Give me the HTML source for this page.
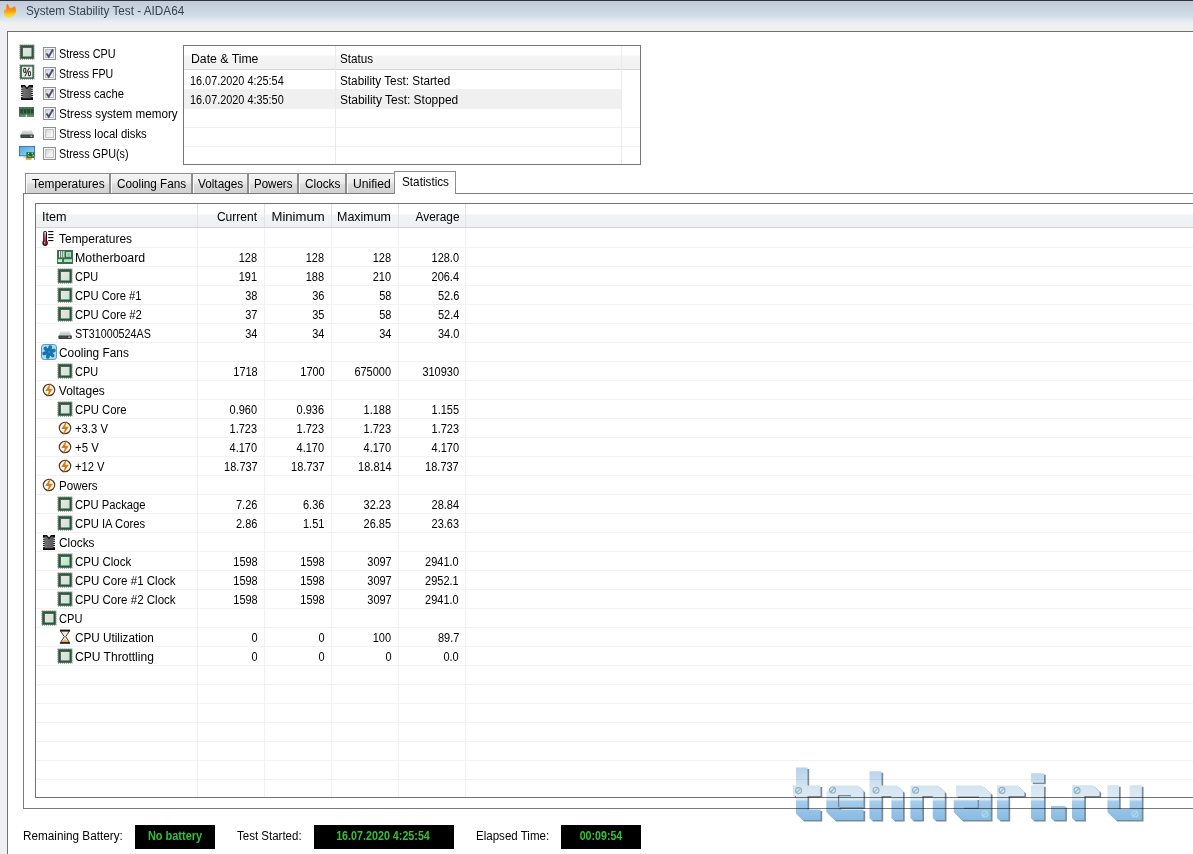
<!DOCTYPE html>
<html>
<head>
<meta charset="utf-8">
<title>System Stability Test - AIDA64</title>
<style>
*{box-sizing:border-box;margin:0;padding:0}
html,body{width:1193px;height:854px;overflow:hidden;background:#f0f0f0}
body{position:relative;font-family:"Liberation Sans",sans-serif;font-size:12px;color:#000;line-height:14px}
.abs{position:absolute}
.t{position:absolute;white-space:nowrap;height:14px;line-height:14px;font-size:12px}
.t span{display:inline-block}
.ttl{color:#39424f}
.grn{color:#34c034;font-weight:bold}
#titlebar{left:0;top:0;width:1193px;height:31px;background:linear-gradient(to bottom,#2b3442 0,#2b3442 1px,#c4cbd7 1px,#c9d3df 9px,#d2e0ec 17px,#dbe6ef 19px,#ebedf0 22px,#f0f0f0 24px,#f1f1f1 31px)}
#leftstrip{left:0;top:22px;width:7px;height:832px;background:#f0f0f3}
#panel{left:7px;top:31px;width:1200px;height:840px;background:#fff;border:1px solid #707070}
.cb{position:absolute;left:43px;width:13px;height:13px;border:1px solid #8e8f8f;background:#f4f4f4}
.cb:before{content:"";position:absolute;left:1px;top:1px;right:1px;bottom:1px}
.cb.on:before{background:linear-gradient(135deg,#cfd0da 0,#e6e6ee 45%,#f4f4f8 100%);border:1px solid #b9bac6}
.cb.off:before{background:linear-gradient(135deg,#d4d4d4 0,#ededed 50%,#fbfbfb 100%);border:1px solid #c4c4c4}
.cb svg{position:absolute;left:0;top:0}
#log{left:183px;top:45px;width:458px;height:120px;border:1px solid #767676;background:#fff}
#loghead{left:184px;top:46px;width:456px;height:23px;background:linear-gradient(to bottom,#ffffff 0,#ffffff 39%,#f5f5f5 45%,#f1f1f1 100%)}
.tab{position:absolute;top:173px;height:20px;border:1px solid #8c8c8c;border-bottom:none;background:linear-gradient(to bottom,#f3f3f3 0,#ececec 48%,#dedede 52%,#d1d1d1 100%);box-shadow:inset 1px 1px 0 #fafafa}
.tabsel{position:absolute;top:171px;height:23px;border:1px solid #8c8c8c;border-bottom:none;background:#fff}
#pane{left:23px;top:193px;width:1180px;height:616px;border:1px solid #7b7b7b;background:#fff}
#list{left:35px;top:203px;width:1170px;height:595px;border:1px solid #737373;background:#fff}
#listhead{left:36px;top:204px;width:1157px;height:23px;background:linear-gradient(to bottom,#ffffff 0,#ffffff 42%,#f2f3f5 48%,#eff0f3 100%)}
.blk{position:absolute;top:825px;height:24px;background:#000}
</style>
</head>
<body>
<div id="titlebar" class="abs"></div>
<div id="leftstrip" class="abs"></div>
<div id="panel" class="abs"></div>

<!-- log -->
<div id="log" class="abs"></div>
<div id="loghead" class="abs"></div>
<div class="abs" style="left:184px;top:69px;width:456px;height:1px;background:#d6d6d6"></div>
<div class="abs" style="left:184px;top:89px;width:437px;height:20px;background:#f0f0f0"></div>
<div class="abs" style="left:184px;top:127px;width:456px;height:1px;background:#efefef"></div>
<div class="abs" style="left:184px;top:146px;width:456px;height:1px;background:#efefef"></div>
<div class="abs" style="left:335px;top:46px;width:1px;height:118px;background:#ebebeb"></div>
<div class="abs" style="left:621px;top:46px;width:1px;height:118px;background:#ebebeb"></div>

<!-- tabs -->
<div id="pane" class="abs"></div>
<div class="tab" style="left:25px;width:85px"></div>
<div class="tab" style="left:110px;width:82px"></div>
<div class="tab" style="left:192px;width:56px"></div>
<div class="tab" style="left:248px;width:50px"></div>
<div class="tab" style="left:298px;width:48px"></div>
<div class="tab" style="left:346px;width:49px"></div>
<div class="tabsel" style="left:394px;width:62px"></div>

<!-- list -->
<div id="list" class="abs"></div>
<div id="listhead" class="abs"></div>
<div class="abs" style="left:36px;top:227px;width:1157px;height:1px;background:#d5d5d5"></div>
<div class="abs" style="left:197px;top:228px;width:1px;height:569px;background:#f0f0f0"></div>
<div class="abs" style="left:197px;top:204px;width:1px;height:23px;background:#e2e4e8"></div>
<div class="abs" style="left:264px;top:228px;width:1px;height:569px;background:#f0f0f0"></div>
<div class="abs" style="left:264px;top:204px;width:1px;height:23px;background:#e2e4e8"></div>
<div class="abs" style="left:331px;top:228px;width:1px;height:569px;background:#f0f0f0"></div>
<div class="abs" style="left:331px;top:204px;width:1px;height:23px;background:#e2e4e8"></div>
<div class="abs" style="left:398px;top:228px;width:1px;height:569px;background:#f0f0f0"></div>
<div class="abs" style="left:398px;top:204px;width:1px;height:23px;background:#e2e4e8"></div>
<div class="abs" style="left:465px;top:228px;width:1px;height:569px;background:#f0f0f0"></div>
<div class="abs" style="left:465px;top:204px;width:1px;height:23px;background:#e2e4e8"></div>
<div class="abs" style="left:36px;top:247px;width:1157px;height:1px;background:#f2f2f2"></div>
<div class="abs" style="left:36px;top:266px;width:1157px;height:1px;background:#f2f2f2"></div>
<div class="abs" style="left:36px;top:285px;width:1157px;height:1px;background:#f2f2f2"></div>
<div class="abs" style="left:36px;top:304px;width:1157px;height:1px;background:#f2f2f2"></div>
<div class="abs" style="left:36px;top:323px;width:1157px;height:1px;background:#f2f2f2"></div>
<div class="abs" style="left:36px;top:342px;width:1157px;height:1px;background:#f2f2f2"></div>
<div class="abs" style="left:36px;top:361px;width:1157px;height:1px;background:#f2f2f2"></div>
<div class="abs" style="left:36px;top:380px;width:1157px;height:1px;background:#f2f2f2"></div>
<div class="abs" style="left:36px;top:399px;width:1157px;height:1px;background:#f2f2f2"></div>
<div class="abs" style="left:36px;top:418px;width:1157px;height:1px;background:#f2f2f2"></div>
<div class="abs" style="left:36px;top:437px;width:1157px;height:1px;background:#f2f2f2"></div>
<div class="abs" style="left:36px;top:456px;width:1157px;height:1px;background:#f2f2f2"></div>
<div class="abs" style="left:36px;top:475px;width:1157px;height:1px;background:#f2f2f2"></div>
<div class="abs" style="left:36px;top:494px;width:1157px;height:1px;background:#f2f2f2"></div>
<div class="abs" style="left:36px;top:513px;width:1157px;height:1px;background:#f2f2f2"></div>
<div class="abs" style="left:36px;top:532px;width:1157px;height:1px;background:#f2f2f2"></div>
<div class="abs" style="left:36px;top:551px;width:1157px;height:1px;background:#f2f2f2"></div>
<div class="abs" style="left:36px;top:570px;width:1157px;height:1px;background:#f2f2f2"></div>
<div class="abs" style="left:36px;top:589px;width:1157px;height:1px;background:#f2f2f2"></div>
<div class="abs" style="left:36px;top:608px;width:1157px;height:1px;background:#f2f2f2"></div>
<div class="abs" style="left:36px;top:627px;width:1157px;height:1px;background:#f2f2f2"></div>
<div class="abs" style="left:36px;top:646px;width:1157px;height:1px;background:#f2f2f2"></div>
<div class="abs" style="left:36px;top:665px;width:1157px;height:1px;background:#f2f2f2"></div>
<div class="abs" style="left:36px;top:684px;width:1157px;height:1px;background:#f2f2f2"></div>
<div class="abs" style="left:36px;top:703px;width:1157px;height:1px;background:#f2f2f2"></div>
<div class="abs" style="left:36px;top:722px;width:1157px;height:1px;background:#f2f2f2"></div>
<div class="abs" style="left:36px;top:741px;width:1157px;height:1px;background:#f2f2f2"></div>
<div class="abs" style="left:36px;top:760px;width:1157px;height:1px;background:#f2f2f2"></div>
<div class="abs" style="left:36px;top:779px;width:1157px;height:1px;background:#f2f2f2"></div>

<!-- checkboxes -->
<div class="cb on" style="top:47px"><svg width="11" height="11" viewBox="0 0 11 11"><path d="M2.6,5.6 L4.7,8.8 L8.9,1.6" fill="none" stroke="#474c66" stroke-width="1.9" stroke-linecap="butt" stroke-linejoin="miter"/></svg></div>
<div class="cb on" style="top:67px"><svg width="11" height="11" viewBox="0 0 11 11"><path d="M2.6,5.6 L4.7,8.8 L8.9,1.6" fill="none" stroke="#474c66" stroke-width="1.9" stroke-linecap="butt" stroke-linejoin="miter"/></svg></div>
<div class="cb on" style="top:87px"><svg width="11" height="11" viewBox="0 0 11 11"><path d="M2.6,5.6 L4.7,8.8 L8.9,1.6" fill="none" stroke="#474c66" stroke-width="1.9" stroke-linecap="butt" stroke-linejoin="miter"/></svg></div>
<div class="cb on" style="top:107px"><svg width="11" height="11" viewBox="0 0 11 11"><path d="M2.6,5.6 L4.7,8.8 L8.9,1.6" fill="none" stroke="#474c66" stroke-width="1.9" stroke-linecap="butt" stroke-linejoin="miter"/></svg></div>
<div class="cb off" style="top:127px"></div>
<div class="cb off" style="top:147px"></div>

<!-- status boxes -->
<div class="blk" style="left:135px;width:80px"></div>
<div class="blk" style="left:314px;width:140px"></div>
<div class="blk" style="left:561px;width:80px"></div>

<svg class="abs" style="left:0;top:0" width="1193" height="854" viewBox="0 0 1193 854">

<defs>
<linearGradient id="gInner" x1="0" y1="0" x2="1" y2="1"><stop offset="0" stop-color="#ece2e2"/><stop offset="1" stop-color="#cbe6d8"/></linearGradient>
<linearGradient id="gInner2" x1="0" y1="0" x2="1" y2="1"><stop offset="0" stop-color="#d4f2dc"/><stop offset="1" stop-color="#b4e6c4"/></linearGradient>
<linearGradient id="gTherm" x1="0" y1="0" x2="0" y2="1"><stop offset="0" stop-color="#f6dada"/><stop offset="0.45" stop-color="#d86070"/><stop offset="1" stop-color="#b81c30"/></linearGradient>
<linearGradient id="gMon" x1="0" y1="0" x2="1" y2="1"><stop offset="0" stop-color="#4aa6e6"/><stop offset="1" stop-color="#9adaf2"/></linearGradient>
<linearGradient id="gSand" x1="0" y1="0" x2="0" y2="1"><stop offset="0" stop-color="#f6dca8"/><stop offset="1" stop-color="#de9a38"/></linearGradient>
<linearGradient id="gFlame" x1="0" y1="0" x2="0" y2="1"><stop offset="0" stop-color="#e96f19"/><stop offset="0.5" stop-color="#f6921c"/><stop offset="0.78" stop-color="#ffcf1c"/><stop offset="1" stop-color="#ffe246"/></linearGradient>
<linearGradient id="gDip" x1="0" y1="0" x2="1" y2="0"><stop offset="0" stop-color="#707070"/><stop offset="1" stop-color="#5a5a5a"/></linearGradient>
<g id="cpu">
 <rect x="0.85" y="0.85" width="14.3" height="14.3" fill="none" stroke="#456c52" stroke-width="0.9" stroke-dasharray="1 1" stroke-dashoffset="0.2"/>
 <rect x="1.2" y="1.2" width="13.6" height="13.6" fill="#32543e"/>
 <rect x="3.1" y="3.1" width="9.8" height="9.8" fill="#467055"/>
 <rect x="4" y="4" width="8.4" height="8.4" fill="url(#gInner)"/>
</g>
<g id="cpu2">
 <rect x="0.85" y="0.85" width="14.3" height="14.3" fill="none" stroke="#456c52" stroke-width="0.9" stroke-dasharray="1 1" stroke-dashoffset="0.2"/>
 <rect x="1.2" y="1.2" width="13.6" height="13.6" fill="#32543e"/>
 <rect x="3.1" y="3.1" width="9.8" height="9.8" fill="#467055"/>
 <rect x="4" y="4" width="8.4" height="8.4" fill="url(#gInner2)"/>
</g>
<g id="fpu">
 <rect x="0.85" y="0.85" width="14.3" height="14.3" fill="none" stroke="#456c52" stroke-width="0.9" stroke-dasharray="1 1" stroke-dashoffset="0.2"/>
 <rect x="1.2" y="1.2" width="13.6" height="13.6" fill="#32543e"/>
 <rect x="2.8" y="2.6" width="10.6" height="10.8" fill="#e4efe8"/>
 <text transform="translate(8.1,12) scale(0.84,1)" font-family="Liberation Sans, sans-serif" font-size="11" text-anchor="middle" fill="#0c0c0c" stroke="#0c0c0c" stroke-width="0.25">%</text>
</g>
<g id="dip">
 <path d="M2,1 H6 L8,3.4 L10,1 H14 V16 H2 Z" fill="#0a0a0a"/>
 <path d="M3.8,2.6 H5.5 L8,5.3 L10.5,2.6 H12.2 V14.2 H3.8 Z" fill="url(#gDip)"/>
 <g fill="#fff"><rect x="2.1" y="3.6" width="1.5" height="1.2"/><rect x="12.4" y="3.6" width="1.5" height="1.2"/><rect x="2.1" y="5.7" width="1.5" height="1.2"/><rect x="12.4" y="5.7" width="1.5" height="1.2"/><rect x="2.1" y="7.8" width="1.5" height="1.2"/><rect x="12.4" y="7.8" width="1.5" height="1.2"/><rect x="2.1" y="9.9" width="1.5" height="1.2"/><rect x="12.4" y="9.9" width="1.5" height="1.2"/><rect x="2.1" y="12.0" width="1.5" height="1.2"/><rect x="12.4" y="12.0" width="1.5" height="1.2"/></g>
</g>
<g id="mem">
 <rect x="0" y="3" width="15" height="9.8" fill="#41704f"/>
 <g fill="#284a35"><rect x="1.2" y="5" width="2.6" height="4.2"/><rect x="4.8" y="5" width="2.6" height="4.2"/><rect x="8.4" y="5" width="2.6" height="4.2"/><rect x="12" y="5" width="2.4" height="4.2"/></g>
 <g fill="#6f9b7d"><rect x="1.8" y="3.6" width="1" height="0.9"/><rect x="5.4" y="3.6" width="1" height="0.9"/><rect x="9" y="3.6" width="1" height="0.9"/><rect x="12.4" y="3.6" width="1" height="0.9"/></g>
 <rect x="0.4" y="10.8" width="14.2" height="1.2" fill="#5f8f6f"/>
 <rect x="6.8" y="10.6" width="1" height="2.3" fill="#fff"/>
</g>
<g id="hdd">
 <path d="M3.4,6.8 H12.8 L14.7,11 H1.5 Z" fill="#c9cdcd"/>
 <path d="M3.4,6.8 H12.8 L13.2,7.8 H3 Z" fill="#dfe2e2"/>
 <rect x="1.4" y="10.6" width="13.4" height="3.3" rx="0.6" fill="#3a3e3e"/>
 <rect x="2.6" y="11.8" width="7" height="0.7" fill="#5c6060"/>
 <rect x="11.3" y="11.6" width="2" height="1.1" fill="#e8ecec"/>
</g>
<g id="gpu">
 <rect x="0.4" y="2.4" width="15.2" height="9.4" fill="url(#gMon)" stroke="#356f9c" stroke-width="0.9"/>
 <rect x="4.5" y="12.6" width="3" height="0.9" fill="#9aa2aa"/>
 <rect x="7.3" y="8" width="8.2" height="6" fill="#2f7a46"/>
 <g fill="#bfe6c6"><rect x="9" y="8.8" width="1.2" height="1.2"/><rect x="12.6" y="8.6" width="1.3" height="1.3"/><rect x="13.6" y="11" width="1.2" height="1.2"/><rect x="9.4" y="11.4" width="2.4" height="1"/></g>
 <rect x="10.2" y="9.6" width="2.6" height="2.4" fill="#1f5a30"/>
 <rect x="6.8" y="14" width="5.8" height="1.8" fill="#f0981e"/>
 <rect x="15" y="12" width="0.8" height="4" fill="#7a828a"/>
</g>
<g id="therm">
 <rect x="2.2" y="1" width="3.8" height="13" rx="1.9" fill="#111"/>
 <circle cx="4.1" cy="13.1" r="2.8" fill="#111"/>
 <rect x="3.3" y="2" width="1.7" height="11" fill="url(#gTherm)"/>
 <circle cx="4.1" cy="13.1" r="1.8" fill="#b81c30"/>
 <rect x="3.1" y="11.6" width="0.9" height="2" fill="#e89aa2"/>
 <g fill="#111"><rect x="7.2" y="1" width="5.2" height="1.1"/><rect x="7.2" y="4" width="5.2" height="1.1"/><rect x="7.2" y="7" width="5.2" height="1.1"/><rect x="7.2" y="10" width="5.2" height="1.1"/></g>
</g>
<g id="mb">
 <rect x="0" y="1" width="16" height="14" fill="#3d6e4d"/>
 <g fill="#eaf6ee"><rect x="2" y="2.2" width="1.2" height="6.2"/><rect x="4.1" y="2.2" width="1.2" height="6.2"/><rect x="6.2" y="2.2" width="1.2" height="6.2"/></g>
 <rect x="9" y="3" width="5" height="4.8" fill="#a9dcba"/><rect x="10.2" y="4.2" width="2.6" height="2.4" fill="#8fcaa4"/>
 <rect x="0.9" y="10.2" width="4.2" height="2.8" fill="#c3eed2"/>
 <rect x="7" y="10.2" width="8" height="2.8" fill="#aee2c0"/>
</g>
<g id="fan">
 <rect x="0.5" y="0.5" width="15" height="15" rx="2.6" fill="#aadcf4" stroke="#5b9cc2" stroke-width="1"/>
 <g stroke="#1874ae" stroke-width="3.7" stroke-linecap="round">
  <line x1="8" y1="2.9" x2="8" y2="13.1" transform="rotate(14 8 8)"/>
  <line x1="8" y1="2.9" x2="8" y2="13.1" transform="rotate(74 8 8)"/>
  <line x1="8" y1="2.9" x2="8" y2="13.1" transform="rotate(134 8 8)"/>
 </g>
 <circle cx="8" cy="8" r="1.2" fill="#2a8ac2"/>
</g>
<g id="volt">
 <circle cx="8" cy="8" r="5.7" fill="#fffaf2" stroke="#56381f" stroke-width="1.2"/>
 <path d="M9.8,0.4 L4.3,8.9 L7.8,8.9 L6,15.5 L11.8,6.8 L8.3,6.8 Z" fill="#d27c1c"/>
</g>
<g id="hour">
 <path d="M3.6,2 H12.4 L8.7,7.7 L12.4,13.4 H3.6 L7.3,7.7 Z" fill="#fbf4e2" stroke="#222" stroke-width="0.9" stroke-linejoin="round"/>
 <path d="M8,9.4 L11.4,13.1 H4.6 Z" fill="url(#gSand)"/>
 <path d="M5.6,3 H10.4 L8,6.4 Z" fill="#f4ead0"/>
 <rect x="2.9" y="0.6" width="10.2" height="1.7" fill="#1c1c1c"/>
 <rect x="2.9" y="13.3" width="10.2" height="1.5" fill="#1c1c1c"/>
</g>
<g id="flame">
 <path d="M7.2,3.4 C8,5.4 9.4,6.6 10.3,8.5 C11.6,8.1 13.2,7.3 14.7,6 C15.8,7.9 16.4,10.2 15.7,12.5 C14.8,15.5 12,17.7 9,17.7 C6,17.7 3.9,15.5 3.9,12.6 C3.9,11 4.5,9.7 5.2,8.9 C5.3,9.9 5.7,10.5 6.3,10.7 C5.9,8.3 6.1,5.5 7.2,3.4 Z" fill="url(#gFlame)"/>
 <path d="M8.6,9.5 C9.4,10.4 10.6,10.6 11.8,10 C12,11.6 11.2,12.8 9.8,13.2 C8.4,13.4 7.4,12.4 7.6,11 C7.8,10.4 8.2,9.9 8.6,9.5 Z" fill="#f9a51c" opacity="0.6"/>
</g>
</defs>

<use href="#flame" x="0" y="0"/>
<use href="#cpu" x="19" y="44"/>
<use href="#fpu" x="19" y="64"/>
<use href="#dip" x="19" y="84"/>
<use href="#mem" x="19" y="104"/>
<use href="#hdd" x="19" y="124"/>
<use href="#gpu" x="19" y="144"/>
<use href="#therm" x="41" y="230"/>
<use href="#mb" x="57" y="249"/>
<use href="#cpu" x="57" y="268"/>
<use href="#cpu" x="57" y="287"/>
<use href="#cpu" x="57" y="306"/>
<use href="#hdd" x="57" y="325"/>
<use href="#fan" x="41" y="344"/>
<use href="#cpu" x="57" y="363"/>
<use href="#volt" x="41" y="382"/>
<use href="#cpu" x="57" y="401"/>
<use href="#volt" x="57" y="420"/>
<use href="#volt" x="57" y="439"/>
<use href="#volt" x="57" y="458"/>
<use href="#volt" x="41" y="477"/>
<use href="#cpu" x="57" y="496"/>
<use href="#cpu" x="57" y="515"/>
<use href="#dip" x="41" y="534"/>
<use href="#cpu2" x="57" y="553"/>
<use href="#cpu" x="57" y="572"/>
<use href="#cpu" x="57" y="591"/>
<use href="#cpu" x="41" y="610"/>
<use href="#hour" x="57" y="629"/>
<use href="#cpu" x="57" y="648"/>
</svg>
<div class="t ttl" style="top:3.7px;left:26.1px;transform-origin:0 0;transform:scaleX(0.9775);"><span>System Stability Test - AIDA64</span></div>
<div class="t" style="top:46.9px;left:58.5px;transform-origin:0 0;transform:scaleX(0.9029);"><span>Stress CPU</span></div>
<div class="t" style="top:66.9px;left:58.5px;transform-origin:0 0;transform:scaleX(0.8835);"><span>Stress FPU</span></div>
<div class="t" style="top:86.9px;left:58.5px;transform-origin:0 0;transform:scaleX(0.9355);"><span>Stress cache</span></div>
<div class="t" style="top:106.9px;left:58.5px;transform-origin:0 0;transform:scaleX(0.9720);"><span>Stress system memory</span></div>
<div class="t" style="top:126.9px;left:58.5px;transform-origin:0 0;transform:scaleX(0.9471);"><span>Stress local disks</span></div>
<div class="t" style="top:146.9px;left:58.5px;transform-origin:0 0;transform:scaleX(0.8999);"><span>Stress GPU(s)</span></div>
<div class="t" style="top:51.7px;left:191.0px;transform-origin:0 0;transform:scaleX(1.0207);"><span>Date &amp; Time</span></div>
<div class="t" style="top:51.7px;left:340.2px;transform-origin:0 0;transform:scaleX(0.9726);"><span>Status</span></div>
<div class="t" style="top:73.5px;left:189.9px;transform-origin:0 0;transform:scaleX(0.9059);"><span>16.07.2020 4:25:54</span></div>
<div class="t" style="top:73.5px;left:340.2px;transform-origin:0 0;transform:scaleX(0.9796);"><span>Stability Test: Started</span></div>
<div class="t" style="top:92.5px;left:189.9px;transform-origin:0 0;transform:scaleX(0.9059);"><span>16.07.2020 4:35:50</span></div>
<div class="t" style="top:92.5px;left:340.2px;transform-origin:0 0;transform:scaleX(0.9972);"><span>Stability Test: Stopped</span></div>
<div class="t" style="top:176.6px;left:32.0px;transform-origin:0 0;transform:scaleX(0.9894);"><span>Temperatures</span></div>
<div class="t" style="top:176.6px;left:116.5px;transform-origin:0 0;transform:scaleX(0.9785);"><span>Cooling Fans</span></div>
<div class="t" style="top:176.6px;left:197.6px;transform-origin:0 0;transform:scaleX(0.9816);"><span>Voltages</span></div>
<div class="t" style="top:176.6px;left:254.3px;transform-origin:0 0;transform:scaleX(0.9596);"><span>Powers</span></div>
<div class="t" style="top:176.6px;left:304.6px;transform-origin:0 0;transform:scaleX(0.9829);"><span>Clocks</span></div>
<div class="t" style="top:176.6px;left:352.5px;transform-origin:0 0;transform:scaleX(1.0118);"><span>Unified</span></div>
<div class="t" style="top:174.6px;left:402.1px;transform-origin:0 0;transform:scaleX(0.9788);"><span>Statistics</span></div>
<div class="t" style="top:209.7px;left:42.2px;transform-origin:0 0;transform:scaleX(1.0495);"><span>Item</span></div>
<div class="t" style="top:209.7px;right:935.6px;transform-origin:100% 0;transform:scaleX(1.0021);"><span>Current</span></div>
<div class="t" style="top:209.7px;right:868.4px;transform-origin:100% 0;transform:scaleX(1.0930);"><span>Minimum</span></div>
<div class="t" style="top:209.7px;right:801.8px;transform-origin:100% 0;transform:scaleX(1.0381);"><span>Maximum</span></div>
<div class="t" style="top:209.7px;right:733.9px;transform-origin:100% 0;transform:scaleX(0.9869);"><span>Average</span></div>
<div class="t" style="top:231.8px;left:58.8px;transform-origin:0 0;transform:scaleX(0.9963);"><span>Temperatures</span></div>
<div class="t" style="top:250.8px;left:74.8px;transform-origin:0 0;transform:scaleX(1.0316);"><span>Motherboard</span></div>
<div class="t" style="top:250.8px;right:935.7px;transform-origin:100% 0;transform:scaleX(0.9150);"><span>128</span></div>
<div class="t" style="top:250.8px;right:868.5px;transform-origin:100% 0;transform:scaleX(0.9150);"><span>128</span></div>
<div class="t" style="top:250.8px;right:801.7px;transform-origin:100% 0;transform:scaleX(0.9150);"><span>128</span></div>
<div class="t" style="top:250.8px;right:734.0px;transform-origin:100% 0;transform:scaleX(0.9150);"><span>128.0</span></div>
<div class="t" style="top:269.8px;left:74.8px;transform-origin:0 0;transform:scaleX(0.9115);"><span>CPU</span></div>
<div class="t" style="top:269.8px;right:935.7px;transform-origin:100% 0;transform:scaleX(0.9150);"><span>191</span></div>
<div class="t" style="top:269.8px;right:868.5px;transform-origin:100% 0;transform:scaleX(0.9150);"><span>188</span></div>
<div class="t" style="top:269.8px;right:801.7px;transform-origin:100% 0;transform:scaleX(0.9150);"><span>210</span></div>
<div class="t" style="top:269.8px;right:734.0px;transform-origin:100% 0;transform:scaleX(0.9150);"><span>206.4</span></div>
<div class="t" style="top:288.8px;left:74.8px;transform-origin:0 0;transform:scaleX(0.9303);"><span>CPU Core #1</span></div>
<div class="t" style="top:288.8px;right:935.7px;transform-origin:100% 0;transform:scaleX(0.9150);"><span>38</span></div>
<div class="t" style="top:288.8px;right:868.5px;transform-origin:100% 0;transform:scaleX(0.9150);"><span>36</span></div>
<div class="t" style="top:288.8px;right:801.7px;transform-origin:100% 0;transform:scaleX(0.9150);"><span>58</span></div>
<div class="t" style="top:288.8px;right:734.0px;transform-origin:100% 0;transform:scaleX(0.9150);"><span>52.6</span></div>
<div class="t" style="top:307.8px;left:74.8px;transform-origin:0 0;transform:scaleX(0.9359);"><span>CPU Core #2</span></div>
<div class="t" style="top:307.8px;right:935.7px;transform-origin:100% 0;transform:scaleX(0.9150);"><span>37</span></div>
<div class="t" style="top:307.8px;right:868.5px;transform-origin:100% 0;transform:scaleX(0.9150);"><span>35</span></div>
<div class="t" style="top:307.8px;right:801.7px;transform-origin:100% 0;transform:scaleX(0.9150);"><span>58</span></div>
<div class="t" style="top:307.8px;right:734.0px;transform-origin:100% 0;transform:scaleX(0.9150);"><span>52.4</span></div>
<div class="t" style="top:326.8px;left:74.8px;transform-origin:0 0;transform:scaleX(0.8957);"><span>ST31000524AS</span></div>
<div class="t" style="top:326.8px;right:935.7px;transform-origin:100% 0;transform:scaleX(0.9150);"><span>34</span></div>
<div class="t" style="top:326.8px;right:868.5px;transform-origin:100% 0;transform:scaleX(0.9150);"><span>34</span></div>
<div class="t" style="top:326.8px;right:801.7px;transform-origin:100% 0;transform:scaleX(0.9150);"><span>34</span></div>
<div class="t" style="top:326.8px;right:734.0px;transform-origin:100% 0;transform:scaleX(0.9150);"><span>34.0</span></div>
<div class="t" style="top:345.8px;left:58.8px;transform-origin:0 0;transform:scaleX(0.9884);"><span>Cooling Fans</span></div>
<div class="t" style="top:364.8px;left:74.8px;transform-origin:0 0;transform:scaleX(0.9115);"><span>CPU</span></div>
<div class="t" style="top:364.8px;right:935.7px;transform-origin:100% 0;transform:scaleX(0.9150);"><span>1718</span></div>
<div class="t" style="top:364.8px;right:868.5px;transform-origin:100% 0;transform:scaleX(0.9150);"><span>1700</span></div>
<div class="t" style="top:364.8px;right:801.7px;transform-origin:100% 0;transform:scaleX(0.9150);"><span>675000</span></div>
<div class="t" style="top:364.8px;right:734.0px;transform-origin:100% 0;transform:scaleX(0.9150);"><span>310930</span></div>
<div class="t" style="top:383.8px;left:58.8px;transform-origin:0 0;"><span>Voltages</span></div>
<div class="t" style="top:402.8px;left:74.8px;transform-origin:0 0;transform:scaleX(0.9435);"><span>CPU Core</span></div>
<div class="t" style="top:402.8px;right:935.7px;transform-origin:100% 0;transform:scaleX(0.9150);"><span>0.960</span></div>
<div class="t" style="top:402.8px;right:868.5px;transform-origin:100% 0;transform:scaleX(0.9150);"><span>0.936</span></div>
<div class="t" style="top:402.8px;right:801.7px;transform-origin:100% 0;transform:scaleX(0.9150);"><span>1.188</span></div>
<div class="t" style="top:402.8px;right:734.0px;transform-origin:100% 0;transform:scaleX(0.9150);"><span>1.155</span></div>
<div class="t" style="top:421.8px;left:74.8px;transform-origin:0 0;transform:scaleX(0.9392);"><span>+3.3 V</span></div>
<div class="t" style="top:421.8px;right:935.7px;transform-origin:100% 0;transform:scaleX(0.9150);"><span>1.723</span></div>
<div class="t" style="top:421.8px;right:868.5px;transform-origin:100% 0;transform:scaleX(0.9150);"><span>1.723</span></div>
<div class="t" style="top:421.8px;right:801.7px;transform-origin:100% 0;transform:scaleX(0.9150);"><span>1.723</span></div>
<div class="t" style="top:421.8px;right:734.0px;transform-origin:100% 0;transform:scaleX(0.9150);"><span>1.723</span></div>
<div class="t" style="top:440.8px;left:74.8px;transform-origin:0 0;transform:scaleX(0.9508);"><span>+5 V</span></div>
<div class="t" style="top:440.8px;right:935.7px;transform-origin:100% 0;transform:scaleX(0.9150);"><span>4.170</span></div>
<div class="t" style="top:440.8px;right:868.5px;transform-origin:100% 0;transform:scaleX(0.9150);"><span>4.170</span></div>
<div class="t" style="top:440.8px;right:801.7px;transform-origin:100% 0;transform:scaleX(0.9150);"><span>4.170</span></div>
<div class="t" style="top:440.8px;right:734.0px;transform-origin:100% 0;transform:scaleX(0.9150);"><span>4.170</span></div>
<div class="t" style="top:459.8px;left:74.8px;transform-origin:0 0;transform:scaleX(0.9337);"><span>+12 V</span></div>
<div class="t" style="top:459.8px;right:935.7px;transform-origin:100% 0;transform:scaleX(0.9150);"><span>18.737</span></div>
<div class="t" style="top:459.8px;right:868.5px;transform-origin:100% 0;transform:scaleX(0.9150);"><span>18.737</span></div>
<div class="t" style="top:459.8px;right:801.7px;transform-origin:100% 0;transform:scaleX(0.9150);"><span>18.814</span></div>
<div class="t" style="top:459.8px;right:734.0px;transform-origin:100% 0;transform:scaleX(0.9150);"><span>18.737</span></div>
<div class="t" style="top:478.8px;left:58.8px;transform-origin:0 0;transform:scaleX(0.9646);"><span>Powers</span></div>
<div class="t" style="top:497.8px;left:74.8px;transform-origin:0 0;transform:scaleX(0.9353);"><span>CPU Package</span></div>
<div class="t" style="top:497.8px;right:935.7px;transform-origin:100% 0;transform:scaleX(0.9150);"><span>7.26</span></div>
<div class="t" style="top:497.8px;right:868.5px;transform-origin:100% 0;transform:scaleX(0.9150);"><span>6.36</span></div>
<div class="t" style="top:497.8px;right:801.7px;transform-origin:100% 0;transform:scaleX(0.9150);"><span>32.23</span></div>
<div class="t" style="top:497.8px;right:734.0px;transform-origin:100% 0;transform:scaleX(0.9150);"><span>28.84</span></div>
<div class="t" style="top:516.8px;left:74.8px;transform-origin:0 0;transform:scaleX(0.9397);"><span>CPU IA Cores</span></div>
<div class="t" style="top:516.8px;right:935.7px;transform-origin:100% 0;transform:scaleX(0.9150);"><span>2.86</span></div>
<div class="t" style="top:516.8px;right:868.5px;transform-origin:100% 0;transform:scaleX(0.9150);"><span>1.51</span></div>
<div class="t" style="top:516.8px;right:801.7px;transform-origin:100% 0;transform:scaleX(0.9150);"><span>26.85</span></div>
<div class="t" style="top:516.8px;right:734.0px;transform-origin:100% 0;transform:scaleX(0.9150);"><span>23.63</span></div>
<div class="t" style="top:535.8px;left:58.8px;transform-origin:0 0;transform:scaleX(0.9857);"><span>Clocks</span></div>
<div class="t" style="top:554.8px;left:74.8px;transform-origin:0 0;transform:scaleX(0.9593);"><span>CPU Clock</span></div>
<div class="t" style="top:554.8px;right:935.7px;transform-origin:100% 0;transform:scaleX(0.9150);"><span>1598</span></div>
<div class="t" style="top:554.8px;right:868.5px;transform-origin:100% 0;transform:scaleX(0.9150);"><span>1598</span></div>
<div class="t" style="top:554.8px;right:801.7px;transform-origin:100% 0;transform:scaleX(0.9150);"><span>3097</span></div>
<div class="t" style="top:554.8px;right:734.0px;transform-origin:100% 0;transform:scaleX(0.9150);"><span>2941.0</span></div>
<div class="t" style="top:573.8px;left:74.8px;transform-origin:0 0;transform:scaleX(0.9608);"><span>CPU Core #1 Clock</span></div>
<div class="t" style="top:573.8px;right:935.7px;transform-origin:100% 0;transform:scaleX(0.9150);"><span>1598</span></div>
<div class="t" style="top:573.8px;right:868.5px;transform-origin:100% 0;transform:scaleX(0.9150);"><span>1598</span></div>
<div class="t" style="top:573.8px;right:801.7px;transform-origin:100% 0;transform:scaleX(0.9150);"><span>3097</span></div>
<div class="t" style="top:573.8px;right:734.0px;transform-origin:100% 0;transform:scaleX(0.9150);"><span>2952.1</span></div>
<div class="t" style="top:592.8px;left:74.8px;transform-origin:0 0;transform:scaleX(0.9608);"><span>CPU Core #2 Clock</span></div>
<div class="t" style="top:592.8px;right:935.7px;transform-origin:100% 0;transform:scaleX(0.9150);"><span>1598</span></div>
<div class="t" style="top:592.8px;right:868.5px;transform-origin:100% 0;transform:scaleX(0.9150);"><span>1598</span></div>
<div class="t" style="top:592.8px;right:801.7px;transform-origin:100% 0;transform:scaleX(0.9150);"><span>3097</span></div>
<div class="t" style="top:592.8px;right:734.0px;transform-origin:100% 0;transform:scaleX(0.9150);"><span>2941.0</span></div>
<div class="t" style="top:611.8px;left:58.8px;transform-origin:0 0;transform:scaleX(0.9233);"><span>CPU</span></div>
<div class="t" style="top:630.8px;left:74.8px;transform-origin:0 0;transform:scaleX(0.9777);"><span>CPU Utilization</span></div>
<div class="t" style="top:630.8px;right:935.7px;transform-origin:100% 0;transform:scaleX(0.9150);"><span>0</span></div>
<div class="t" style="top:630.8px;right:868.5px;transform-origin:100% 0;transform:scaleX(0.9150);"><span>0</span></div>
<div class="t" style="top:630.8px;right:801.7px;transform-origin:100% 0;transform:scaleX(0.9150);"><span>100</span></div>
<div class="t" style="top:630.8px;right:734.0px;transform-origin:100% 0;transform:scaleX(0.9150);"><span>89.7</span></div>
<div class="t" style="top:649.8px;left:74.8px;transform-origin:0 0;transform:scaleX(1.0053);"><span>CPU Throttling</span></div>
<div class="t" style="top:649.8px;right:935.7px;transform-origin:100% 0;transform:scaleX(0.9150);"><span>0</span></div>
<div class="t" style="top:649.8px;right:868.5px;transform-origin:100% 0;transform:scaleX(0.9150);"><span>0</span></div>
<div class="t" style="top:649.8px;right:801.7px;transform-origin:100% 0;transform:scaleX(0.9150);"><span>0</span></div>
<div class="t" style="top:649.8px;right:734.0px;transform-origin:100% 0;transform:scaleX(0.9150);"><span>0.0</span></div>
<div class="t" style="top:829.4px;left:22.9px;transform-origin:0 0;transform:scaleX(0.9780);"><span>Remaining Battery:</span></div>
<div class="t" style="top:829.4px;left:237.3px;transform-origin:0 0;transform:scaleX(0.9588);"><span>Test Started:</span></div>
<div class="t" style="top:829.4px;left:475.6px;transform-origin:0 0;transform:scaleX(0.9626);"><span>Elapsed Time:</span></div>
<div class="t grn" style="top:829.0px;left:25.2px;width:300px;text-align:center;transform-origin:50% 0;transform:scaleX(0.9133);"><span>No battery</span></div>
<div class="t grn" style="top:829.0px;left:233.0px;width:300px;text-align:center;transform-origin:50% 0;transform:scaleX(0.8944);"><span>16.07.2020 4:25:54</span></div>
<div class="t grn" style="top:829.0px;left:450.5px;width:300px;text-align:center;transform-origin:50% 0;transform:scaleX(0.8866);"><span>00:09:54</span></div>

<svg class="abs" style="left:0;top:0;mix-blend-mode:multiply" width="1193" height="854" viewBox="0 0 1193 854">
<defs><linearGradient id="gWm" gradientUnits="userSpaceOnUse" x1="0" y1="767" x2="0" y2="821"><stop offset="0" stop-color="#b4d2ec"/><stop offset="0.2" stop-color="#c3dbef"/><stop offset="0.33" stop-color="#d2e3f1"/><stop offset="0.6" stop-color="#deebf3"/><stop offset="0.64" stop-color="#a3cbeb"/><stop offset="1" stop-color="#87bae2"/></linearGradient></defs>
<g fill="#7b8a98" transform="translate(1.7,1.5)"><path d="M796,767.5 H807.5 V785.5 H820.5 V796 H807.5 V809.5 H820.5 V820 H802.5 L796,813.5 V796 H793 V785.5 H796 Z"/><path d="M833,785.5 H858 L863.5,791 V807.3 H839.5 V809.6 H863.5 V820 H834.5 L826.3,812 V792 Z"/><path d="M869.5,771.2 H881.5 V785.5 H897 L903,791.5 V820 H893.4 L891.4,818 V796 H881.5 V820 H871.5 L869.5,818 Z"/><path d="M910.4,785.5 H938 L944.8,792 V820 H934.8 L932.8,818 V796 H922.3 V820 H912.4 L910.4,818 Z"/><path d="M956,785.5 H982 L990.8,793.5 V820 H961.5 L953.7,812 V799.6 H979 V796.6 H956 Z"/><path d="M997,785.5 H1017.5 L1024.4,792 V796 H1008.5 V820 H999 L997,818 Z"/><path d="M1031,773.2 H1044 V782.7 H1031 Z"/><path d="M1031,785.3 H1044 V820 H1033 L1031,818 Z"/><path d="M1051,806 H1065.2 V820 H1053 L1051,818 Z"/><path d="M1072,785.3 H1093 L1099.5,791.5 V796 H1084.2 V820 H1074 L1072,818 Z"/><path d="M1107.4,785.3 H1119 V809 H1129.6 V785.3 H1141.8 V820 H1115.5 L1107.4,812 Z"/></g>
<g fill="url(#gWm)"><path d="M796,767.5 H807.5 V785.5 H820.5 V796 H807.5 V809.5 H820.5 V820 H802.5 L796,813.5 V796 H793 V785.5 H796 Z"/><path d="M833,785.5 H858 L863.5,791 V807.3 H839.5 V809.6 H863.5 V820 H834.5 L826.3,812 V792 Z"/><path d="M869.5,771.2 H881.5 V785.5 H897 L903,791.5 V820 H893.4 L891.4,818 V796 H881.5 V820 H871.5 L869.5,818 Z"/><path d="M910.4,785.5 H938 L944.8,792 V820 H934.8 L932.8,818 V796 H922.3 V820 H912.4 L910.4,818 Z"/><path d="M956,785.5 H982 L990.8,793.5 V820 H961.5 L953.7,812 V799.6 H979 V796.6 H956 Z"/><path d="M997,785.5 H1017.5 L1024.4,792 V796 H1008.5 V820 H999 L997,818 Z"/><path d="M1031,773.2 H1044 V782.7 H1031 Z"/><path d="M1031,785.3 H1044 V820 H1033 L1031,818 Z"/><path d="M1051,806 H1065.2 V820 H1053 L1051,818 Z"/><path d="M1072,785.3 H1093 L1099.5,791.5 V796 H1084.2 V820 H1074 L1072,818 Z"/><path d="M1107.4,785.3 H1119 V809 H1129.6 V785.3 H1141.8 V820 H1115.5 L1107.4,812 Z"/></g>
<g fill="none" stroke="#77879a" stroke-width="1.3"><path d="M838.6,807.3 V795.6 H851"/><path d="M978.3,800 V808.3 H964"/></g>
<circle cx="798.6" cy="790.6" r="3.0" fill="none" stroke="#8db2c8" stroke-width="1.1"/><path d="M796.6,792.6 L800.6,788.6" stroke="#8db2c8" stroke-width="1.1"/>
<circle cx="832.6" cy="790" r="3.0" fill="none" stroke="#8db2c8" stroke-width="1.1"/><path d="M830.6,792.0 L834.6,788.0" stroke="#8db2c8" stroke-width="1.1"/>
<circle cx="876" cy="790.2" r="3.0" fill="none" stroke="#8db2c8" stroke-width="1.1"/><path d="M874.0,792.2 L878.0,788.2" stroke="#8db2c8" stroke-width="1.1"/>
<circle cx="915.6" cy="790.2" r="3.0" fill="none" stroke="#8db2c8" stroke-width="1.1"/><path d="M913.6,792.2 L917.6,788.2" stroke="#8db2c8" stroke-width="1.1"/>
<circle cx="1002" cy="790.4" r="3.0" fill="none" stroke="#8db2c8" stroke-width="1.1"/><path d="M1000.0,792.4 L1004.0,788.4" stroke="#8db2c8" stroke-width="1.1"/>
<circle cx="1077" cy="790.4" r="3.0" fill="none" stroke="#8db2c8" stroke-width="1.1"/><path d="M1075.0,792.4 L1079.0,788.4" stroke="#8db2c8" stroke-width="1.1"/>
<circle cx="985" cy="814" r="3.0" fill="none" stroke="#a9dcea" stroke-width="1.1"/><path d="M983.0,816.0 L987.0,812.0" stroke="#a9dcea" stroke-width="1.1"/>
<circle cx="1135" cy="814" r="3.0" fill="none" stroke="#a9dcea" stroke-width="1.1"/><path d="M1133.0,816.0 L1137.0,812.0" stroke="#a9dcea" stroke-width="1.1"/>
</svg>
</body>
</html>
